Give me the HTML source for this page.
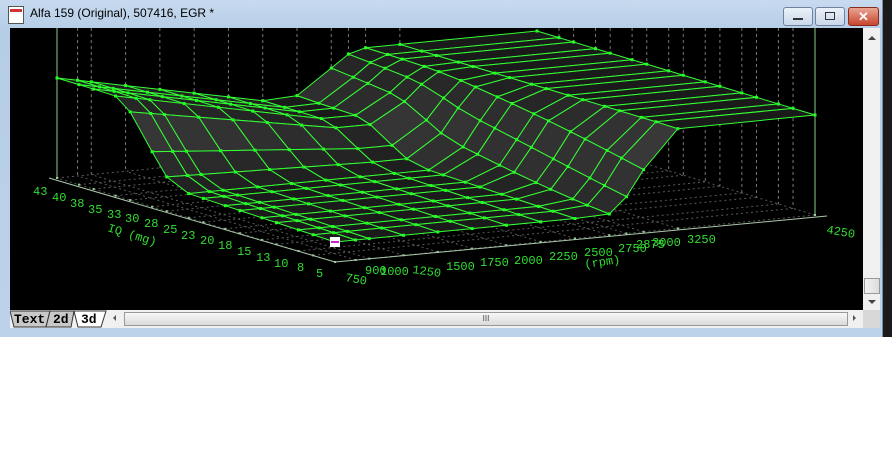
<!DOCTYPE html>
<html><head><meta charset="utf-8"><style>
html,body{margin:0;padding:0;width:892px;height:460px;background:#fff;overflow:hidden;position:relative;font-family:"Liberation Sans",sans-serif}
.win{position:absolute;left:0;top:0;width:882px;height:337px;background:linear-gradient(#c7daef,#b6cde6 30px,#bcd2ea);border-right:1px solid #7a8ea6}
.title{position:absolute;left:30px;top:6px;font-size:12px;color:#000}
.ico{position:absolute;left:8px;top:6px;width:14px;height:16px;background:#fff;border:1px solid #555}
.btn{position:absolute;top:7px;height:17px;border:1px solid #6d83a0;border-radius:3px;background:linear-gradient(#eaf1f9,#c9d8ea)}
.black{position:absolute;left:10px;top:28px;width:853px;height:282px;background:#000}
.vs{position:absolute;left:863px;top:28px;width:17px;height:282px;background:#f0f0f0}
.bar{position:absolute;left:10px;top:310px;width:870px;height:18px;background:#f0f0f0}
.strip{position:absolute;left:883px;top:0;width:9px;height:337px;background:#1a1a1a}
text{font-family:"Liberation Mono",monospace}
</style></head><body>
<div class="strip"></div>
<div class="win">
 <div class="ico"><div style="margin:2px 1px;height:3px;background:#c33"></div></div>
 <div class="title">Alfa 159 (Original), 507416, EGR *</div>
 <div class="btn" style="left:783px;width:28px"><div style="position:absolute;left:9px;top:10px;width:10px;height:2px;background:#333"></div></div>
 <div class="btn" style="left:815px;width:28px"><div style="position:absolute;left:9px;top:4px;width:8px;height:6px;border:1px solid #333"></div></div>
 <div class="btn" style="left:848px;width:29px;background:linear-gradient(#e9a592,#c8452e);border-color:#8a2c1d;color:#fff;font-weight:bold;font-size:13px;text-align:center;line-height:17px">✕</div>
 <div class="black"><svg id="g" width="853" height="282" viewBox="10 28 853 282" style="position:absolute;left:0;top:0"></svg></div>
 <div class="vs">
  <div style="position:absolute;left:5px;top:8px;width:0;height:0;border-left:4px solid transparent;border-right:4px solid transparent;border-bottom:4px solid #444"></div>
  <div style="position:absolute;left:1px;top:250px;width:14px;height:14px;border:1px solid #999;background:linear-gradient(90deg,#f4f4f4,#dcdcdc)"></div>
  <div style="position:absolute;left:5px;top:272px;width:0;height:0;border-left:4px solid transparent;border-right:4px solid transparent;border-top:4px solid #444"></div>
 </div>
 <div class="bar">
  <svg width="110" height="18" style="position:absolute;left:0;top:0">
   <polygon points="0,1 40,1 36,17 4,17" fill="#c8c8c8" stroke="#333"/>
   <polygon points="40,1 64,1 61,17 36,17" fill="#c8c8c8" stroke="#333"/>
   <polygon points="64,1 96,1 91,17 68,17" fill="#fff" stroke="#333"/>
   <text x="4" y="13" font-size="13" font-weight="bold" fill="#000">Text</text>
   <text x="43" y="13" font-size="13" font-weight="bold" fill="#000">2d</text>
   <text x="71" y="13" font-size="13" font-weight="bold" fill="#000">3d</text>
  </svg>
  <div style="position:absolute;left:103px;top:5px;width:0;height:0;border-top:3px solid transparent;border-bottom:3px solid transparent;border-right:3px solid #555"></div>
  <div style="position:absolute;left:114px;top:2px;width:722px;height:12px;border:1px solid #999;background:linear-gradient(#f7f7f7,#dadada);font-size:8px;text-align:center;line-height:12px;color:#444">III</div>
  <div style="position:absolute;left:843px;top:5px;width:0;height:0;border-top:3px solid transparent;border-bottom:3px solid transparent;border-left:3px solid #555"></div>
  <div style="position:absolute;left:853px;top:0;width:17px;height:18px;background:#d8d8d8"></div>
 </div>
</div>
<script>
(function(){
var svg=document.getElementById('g'),out=[];
var R=[750,900,1000,1250,1500,1750,2000,2250,2500,2750,2875,3000,3250,4250];
var Q=[5,8,10,13,15,18,20,23,25,28,30,33,35,38,40,43];
function ss(a,b,x){var t=Math.min(1,Math.max(0,(x-a)/(b-a)));return t*t*(3-2*t);}
function H(q,r){var A=100-43*Math.min(r/0.43,1);var low=20+(A-20)*ss(0.55,0.8,q)+8*q*(1-ss(0.55,0.8,q));var c=0.64-0.08*q;return low+(100-low)*ss(c-0.08,c+0.08,r);}
function F(q,r){return [335-278*q+480*r,262-84*q-47*r];}
function P(q,r,h){var f=F(q,r);return [f[0],f[1]-h];}
var rs=R.map(function(v){return (v-750)/3500}),qs=Q.map(function(v){return (v-5)/38});
for(var i=0;i<qs.length;i++){var a=F(qs[i],0),b=F(qs[i],1);out.push('<line x1="'+a[0]+'" y1="'+a[1]+'" x2="'+b[0]+'" y2="'+b[1]+'" stroke="#5a5a5a" stroke-dasharray="2,3"/>');}
for(var j=0;j<rs.length;j++){var a=F(0,rs[j]),b=F(1,rs[j]);out.push('<line x1="'+a[0]+'" y1="'+a[1]+'" x2="'+b[0]+'" y2="'+b[1]+'" stroke="#5a5a5a" stroke-dasharray="2,3"/>');}
for(var j=1;j<rs.length-1;j++){var a=F(1,rs[j]);out.push('<line x1="'+a[0]+'" y1="28" x2="'+a[0]+'" y2="'+a[1]+'" stroke="#777" stroke-dasharray="3,3"/>');}
for(var i=0;i<qs.length-1;i++){var a=F(qs[i],1);out.push('<line x1="'+a[0]+'" y1="28" x2="'+a[0]+'" y2="'+a[1]+'" stroke="#777" stroke-dasharray="3,3"/>');}
var bl=F(1,0),fr=F(0,1),fl=F(0,0);
out.push('<line x1="'+bl[0]+'" y1="28" x2="'+bl[0]+'" y2="'+bl[1]+'" stroke="#8c8"/>');
out.push('<line x1="'+fr[0]+'" y1="28" x2="'+fr[0]+'" y2="'+fr[1]+'" stroke="#8c8"/>');
out.push('<polyline points="'+(bl[0]-8)+','+bl[1]+' '+fl+' '+(fr[0]+12)+','+(fr[1]+1)+'" fill="none" stroke="#aac8aa"/>');
for(var i=0;i<qs.length;i++){var a=F(qs[i],0);out.push('<rect x="'+(a[0]-1)+'" y="'+(a[1]-1)+'" width="2" height="2" fill="#9c9"/>');}
for(var j=0;j<rs.length;j++){var a=F(0,rs[j]);out.push('<rect x="'+(a[0]-1)+'" y="'+(a[1]-1)+'" width="2" height="2" fill="#9c9"/>');}
var quads=[];
for(var i=0;i<qs.length-1;i++)for(var j=0;j<rs.length-1;j++){
 var c=[[qs[i],rs[j]],[qs[i+1],rs[j]],[qs[i+1],rs[j+1]],[qs[i],rs[j+1]]];
 var pts=c.map(function(p){return P(p[0],p[1],H(p[0],p[1]))});
 var hs=c.map(function(p){return H(p[0],p[1])});
 var cy=F((qs[i]+qs[i+1])/2,(rs[j]+rs[j+1])/2)[1];
 var sl=Math.abs(hs[3]+hs[2]-hs[0]-hs[1])+Math.abs(hs[1]+hs[2]-hs[0]-hs[3]);
 var g=Math.round(Math.min(66,26+sl*0.4));
 quads.push({y:cy,s:'<polygon points="'+pts.join(' ')+'" fill="rgb('+g+','+g+','+g+')" stroke="#33ff33" stroke-width="1"/>'});
}
quads.sort(function(a,b){return a.y-b.y});
quads.forEach(function(q){out.push(q.s)});
for(var i=0;i<qs.length;i++)for(var j=0;j<rs.length;j++){var p=P(qs[i],rs[j],H(qs[i],rs[j]));out.push('<rect x="'+(p[0]-1.5)+'" y="'+(p[1]-1.5)+'" width="3" height="3" fill="#2f2"/>');}
out.push('<rect x="330" y="237" width="10" height="10" fill="#fff"/><line x1="331" y1="242" x2="339" y2="242" stroke="#c2c" stroke-width="2"/>');
svg.insertAdjacentHTML('afterbegin',out.join(''));
})();
</script>
<svg width="892" height="310" style="position:absolute;left:0;top:0;pointer-events:none">
<g font-family="Liberation Mono,monospace" font-size="12" fill="#33dd33">
<text x="33" y="195">43</text><text x="52" y="201">40</text><text x="70" y="207">38</text><text x="88" y="213">35</text><text x="107" y="218">33</text><text x="125" y="222">30</text><text x="144" y="227">28</text><text x="163" y="233">25</text><text x="181" y="239">23</text><text x="200" y="244">20</text><text x="218" y="249">18</text><text x="237" y="255">15</text><text x="256" y="261">13</text><text x="274" y="267">10</text><text x="297" y="271">8</text><text x="316" y="277">5</text>
<text x="107" y="231" transform="rotate(17 107 231)">IQ (mg)</text>
<text x="345" y="281" transform="rotate(10 345 281)">750</text><text x="365" y="274">900</text><text x="380" y="275">1000</text>
<text x="412" y="273" transform="rotate(8 412 273)">1250</text><text x="446" y="270">1500</text><text x="480" y="266">1750</text><text x="514" y="264">2000</text><text x="549" y="260">2250</text><text x="584" y="256">2500</text>
<text x="618" y="252">2750</text><text x="636" y="248">2875</text><text x="652" y="246">3000</text><text x="687" y="243">3250</text><text x="826" y="233" transform="rotate(10 826 233)">4250</text>
<text x="585" y="268" transform="rotate(-8 585 268)">(rpm)</text>
</g></svg>
</body></html>
